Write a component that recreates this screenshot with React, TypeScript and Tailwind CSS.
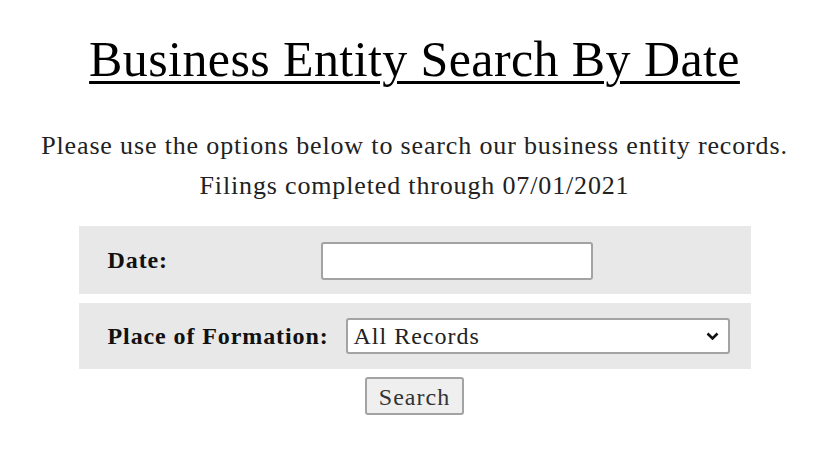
import React from "react";

export default function App() {
  return (
    <div className="min-h-[465px] w-full bg-white text-[#111]" style={{ fontFamily: '"Liberation Serif", serif' }}>
      <div className="flex flex-col items-center pt-[30px]">
        <h1 className="text-[50px] leading-[58px] tracking-[0.4px] underline decoration-[3px] underline-offset-[5px] text-black">
          Business Entity Search By Date
        </h1>
        <p className="mt-[38px] text-center text-[26px] leading-[40px] tracking-[0.85px] text-[#222]">
          Please use the options below to search our business entity records.
          <br />
          Filings completed through 07/01/2021
        </p>
        <div className="mt-[20px] flex w-[672px] flex-col gap-[9px]">
          <div className="flex h-[68px] items-center bg-[#e8e8e8] pl-[29px]">
            <span className="w-[213px] text-[24px] font-bold tracking-[0.9px]">Date:</span>
            <input className="mt-[2px] h-[38px] w-[272px] rounded-[3px] border-2 border-[#a3a3a3] bg-white" />
          </div>
          <div className="flex h-[66px] items-center bg-[#e8e8e8] pl-[29px]">
            <span className="mr-[17px] text-[24px] font-bold tracking-[0.9px]">Place of Formation:</span>
            <div className="relative flex h-[36px] w-[384px] items-center rounded-[3px] border-2 border-[#a3a3a3] bg-white pl-[6px] text-[24px] tracking-[1px] text-[#222]">
              All Records
              <svg className="absolute right-[9px] top-[12px]" width="13" height="9" viewBox="0 0 13 9">
                <path d="M1.5 1.5 L6.5 6.5 L11.5 1.5" fill="none" stroke="#111" strokeWidth="2.6" />
              </svg>
            </div>
          </div>
        </div>
        <button className="mt-[8px] h-[38px] w-[99px] rounded-[3px] border-2 border-[#a3a3a3] bg-[#efefef] text-[24px] tracking-[1px] text-[#333]">
          Search
        </button>
      </div>
    </div>
  );
}
